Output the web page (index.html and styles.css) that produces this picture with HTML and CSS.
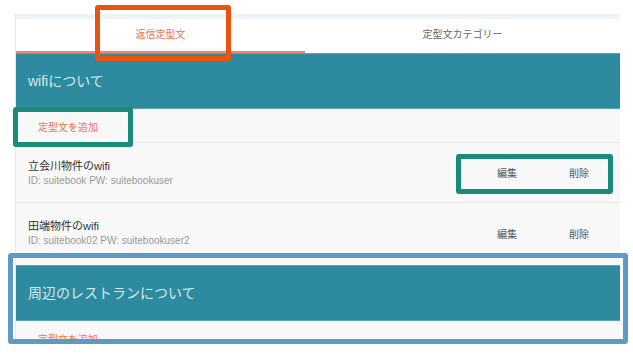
FILE: index.html
```html
<!DOCTYPE html>
<html lang="ja">
<head>
    <meta charset="UTF-8">
    <meta name="viewport" content="width=device-width, initial-scale=1.0">
    <title>定型文</title>
    <link rel="stylesheet" href="styles.css">
</head>
<body>
    <div class="panel">
        <div class="tabs">
            <div class="tab active">返信定型文</div>
            <div class="tab">定型文カテゴリー</div>
        </div>

        <section class="category">
            <h2 class="category-title">wifiについて</h2>
            <div class="add-row"><a class="add-link">定型文を追加</a></div>
            <ul class="template-list">
                <li class="template">
                    <div class="template-body">
                        <div class="template-title">立会川物件のwifi</div>
                        <div class="template-text">ID: suitebook PW: suitebookuser</div>
                    </div>
                    <div class="template-actions">
                        <a class="action">編集</a>
                        <a class="action">削除</a>
                    </div>
                </li>
                <li class="template">
                    <div class="template-body">
                        <div class="template-title">田端物件のwifi</div>
                        <div class="template-text">ID: suitebook02 PW: suitebookuser2</div>
                    </div>
                    <div class="template-actions">
                        <a class="action">編集</a>
                        <a class="action">削除</a>
                    </div>
                </li>
            </ul>
        </section>

        <section class="category">
            <h2 class="category-title">周辺のレストランについて</h2>
            <div class="add-row"><a class="add-link">定型文を追加</a></div>
        </section>
    </div>

    <!-- annotation frames -->
    <div class="mark mark-tab"></div>
    <div class="mark mark-add"></div>
    <div class="mark mark-actions"></div>
    <div class="mark mark-section"></div>
</body>
</html>
```

FILE: styles.css
```css
body {
    margin: 0;
    padding: 0;
    background: white;
    font-family: "Liberation Sans", "Noto Sans CJK JP", sans-serif;
    position: relative;
    height: 356px;
    overflow: hidden;
}
.panel {
    margin: 14px 0 0 16px;
    width: 604px;
    height: 330px;
    overflow: hidden;
    background: #f8f8f8;
    box-shadow: -1px 0 0 #e3eaf0;
}
.tabs {
    display: grid;
    grid-template-columns: 289px 1fr;
    background: white;
    border-top: 5px solid #eef3f8;
}
.tab {
    height: 32px;
    line-height: 32px;
    text-align: center;
    font-size: 10px;
    color: #666;
    border-bottom: 2px solid transparent;
}
.tab.active {
    color: #f2714f;
    border-bottom-color: #f58466;
}
.category-title {
    margin: 0;
    height: 54px;
    line-height: 54px;
    padding-left: 12px;
    background: #2e8a9e;
    border-top: 1px solid #5ea5b4;
    border-bottom: 1px solid #5ea5b4;
    color: #d6eaee;
    font-size: 14px;
    font-weight: normal;
}
.category + .category {
    margin-top: 2px;
}
.add-row {
    height: 33px;
    line-height: 33px;
    padding-left: 22px;
    border-bottom: 1px solid #e8e8e8;
}
.add-link {
    color: #f2714f;
    font-size: 10px;
    cursor: pointer;
}
.template-list {
    list-style: none;
    margin: 0;
    padding: 0;
}
.template {
    display: flex;
    align-items: center;
    height: 59px;
    padding: 0 5px 0 12px;
    border-bottom: 1px solid #e8e8e8;
}
.template:last-child {
    border-bottom: none;
    height: 60px;
}
.template-body {
    flex: 1;
    align-self: flex-start;
    padding-top: 16px;
}
.template-title {
    font-size: 11px;
    line-height: 14px;
    color: #333;
}
.template-text {
    margin-top: 1px;
    font-size: 10px;
    line-height: 13px;
    color: #9a9a9a;
}
.template-actions {
    display: flex;
}
.action {
    width: 72px;
    text-align: center;
    font-size: 10px;
    color: #555;
    cursor: pointer;
}
.mark {
    position: absolute;
    box-sizing: border-box;
    border: 5px solid;
    border-radius: 3px;
}
.mark-tab {
    left: 95px;
    top: 5px;
    width: 136px;
    height: 56px;
    border-color: #e8540f;
}
.mark-add {
    left: 13px;
    top: 107px;
    width: 120px;
    height: 40px;
    border-color: #1a8b77;
}
.mark-actions {
    left: 456px;
    top: 154px;
    width: 157px;
    height: 40px;
    border-color: #1a8b77;
}
.mark-section {
    left: 8px;
    top: 253px;
    width: 620px;
    height: 91px;
    border-color: #5e9bc4;
}
```
